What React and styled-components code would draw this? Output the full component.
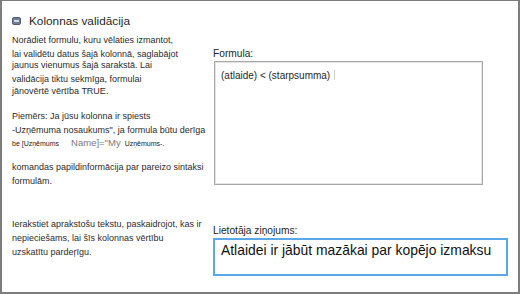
import React from 'react'
import styled, { createGlobalStyle } from 'styled-components'

const GlobalStyle = createGlobalStyle`
  body {
    margin: 0;
    background: #ffffff;
    font-family: "Liberation Sans", Arial, sans-serif;
  }
`

const Frame = styled.div`
  box-sizing: border-box;
  width: 520px;
  height: 294px;
  border: 2px solid #7d7d7d;
  border-top-width: 1px;
  padding: 12px 0 0 10px;
  background: #fff;
  color: #2a2a2a;
`

const Header = styled.div`
  display: flex;
  align-items: center;
  gap: 8px;
  height: 16px;
`

const Title = styled.span`
  font-size: 11.8px;
  color: #1f1f1f;
`

const Section = styled.div`
  display: grid;
  grid-template-columns: 201px 1fr;
  align-items: start;
`

const Col = styled.div`
  display: flex;
  flex-direction: column;
  padding-top: ${p => p.$top}px;
`

const Line = styled.div`
  font-size: 9px;
  line-height: 12px;
  height: 12px;
  white-space: nowrap;
  color: #2c2c2c;
  margin-top: ${p => p.$gap || 0}px;
`

const Tiny = styled.span`
  font-size: 7px;
  color: #222;
`

const Grey = styled.span`
  font-size: 9.5px;
  color: #7a7a7a;
  margin: 0 4px 0 12px;
`

const Label = styled.div`
  font-size: 10.2px;
  line-height: 12px;
  height: 12px;
  color: #1f1f1f;
  margin-bottom: 1px;
`

const FormulaBox = styled.div`
  box-sizing: border-box;
  width: 269px;
  height: 124px;
  margin-left: 1px;
  border: 1px solid #a8a8a8;
  box-shadow: inset 0 0 0 1px #e4e4e4;
  padding: 8px 6px;
  font-size: 10px;
  line-height: 12px;
  color: #1f1f1f;
`

const Caret = styled.span`
  display: inline-block;
  width: 1px;
  height: 10px;
  margin-left: 4px;
  vertical-align: -1px;
  background: #d0d0d0;
`

const MessageBox = styled.div`
  box-sizing: border-box;
  width: 295px;
  height: 38px;
  border: 2px solid #5aa8ea;
  padding: 2px 6px;
  font-size: 13.9px;
  line-height: 16px;
  color: #111;
  white-space: nowrap;
`

const CollapseIcon = () => (
  <svg width="9" height="8" viewBox="0 0 9 8">
    <rect x="0.5" y="0.5" width="8" height="7" rx="1.5" fill="#6f7f98" stroke="#4f5e78" />
    <rect x="2" y="3.3" width="5" height="1.4" fill="#ffffff" />
  </svg>
)

export default function App() {
  return (
    <>
      <GlobalStyle />
      <Frame>
        <Header>
          <CollapseIcon />
          <Title>Kolonnas validācija</Title>
        </Header>
        <Section>
          <Col $top={0}>
            <Line $gap={5}>Norādiet formulu, kuru vēlaties izmantot,</Line>
            <Line $gap={2}>lai validētu datus šajā kolonnā, saglabājot</Line>
            <Line $gap={-1}>jaunus vienumus šajā sarakstā. Lai</Line>
            <Line $gap={2}>validācija tiktu sekmīga, formulai</Line>
            <Line $gap={0}>jānovērtē vērtība TRUE.</Line>
            <Line $gap={13}>Piemērs: Ja jūsu kolonna ir spiests</Line>
            <Line $gap={2}>-Uzņēmuma nosaukums", ja formula būtu derīga</Line>
            <Line $gap={1}>
              <Tiny>be [Uzņēmums</Tiny>
              <Grey>Name]="My</Grey>
              <Tiny>Uzņēmums-.</Tiny>
            </Line>
            <Line $gap={12}>komandas papildinformācija par pareizo sintaksi</Line>
            <Line $gap={2}>formulām.</Line>
          </Col>
          <Col $top={19}>
            <Label>Formula:</Label>
            <FormulaBox>
              (atlaide) &lt; (starpsumma)<Caret />
            </FormulaBox>
          </Col>
        </Section>
        <Section>
          <Col $top={0}>
            <Line $gap={31}>Ierakstiet aprakstošu tekstu, paskaidrojot, kas ir</Line>
            <Line $gap={2}>nepieciešams, lai šīs kolonnas vērtību</Line>
            <Line $gap={2}>uzskatītu pardeŗīgu.</Line>
          </Col>
          <Col $top={38}>
            <Label>Lietotāja ziņojums:</Label>
            <MessageBox>Atlaidei ir jābūt mazākai par kopējo izmaksu</MessageBox>
          </Col>
        </Section>
      </Frame>
    </>
  )
}
